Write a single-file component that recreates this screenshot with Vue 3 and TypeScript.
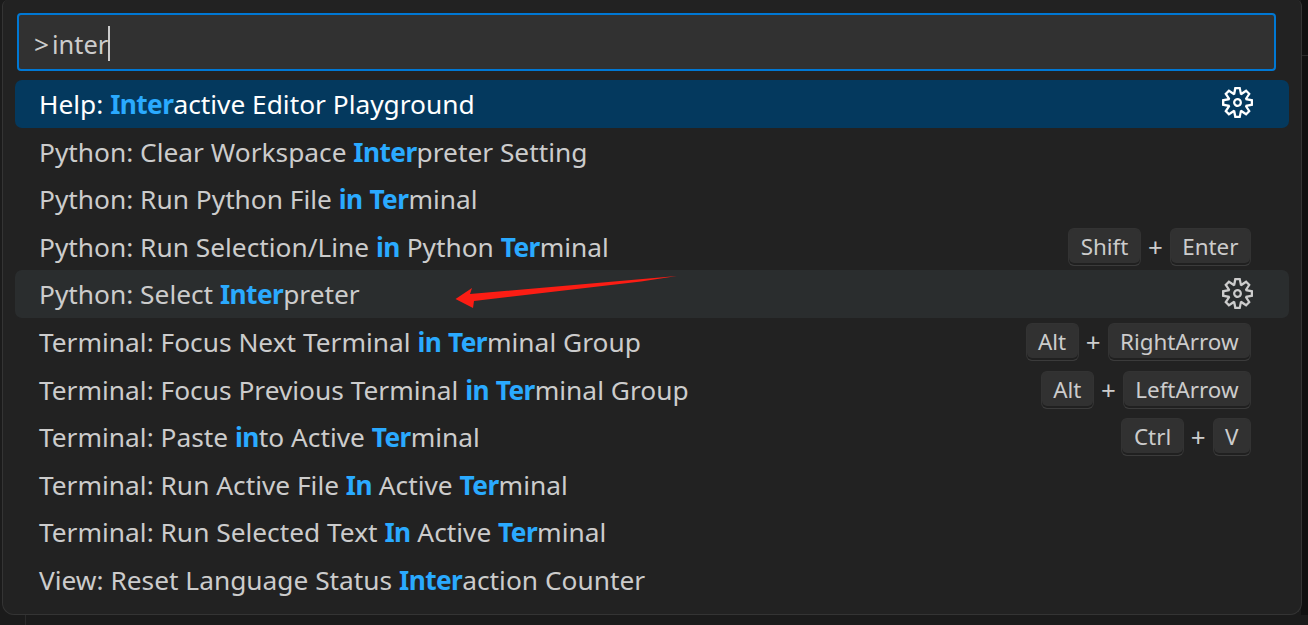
<script setup lang="ts">
interface Cmd {
  label: string[]
  keys?: string[]
  gear?: boolean
  selected?: boolean
  hovered?: boolean
}

// label is split as plain / match / plain / match / plain
const commands: Cmd[] = [
  { label: ['Help: ', 'Inter', 'active Editor Playground'], gear: true, selected: true },
  { label: ['Python: Clear Workspace ', 'Inter', 'preter Setting'] },
  { label: ['Python: Run Python File ', 'in', ' ', 'Ter', 'minal'] },
  { label: ['Python: Run Selection/Line ', 'in', ' Python ', 'Ter', 'minal'], keys: ['Shift', 'Enter'] },
  { label: ['Python: Select ', 'Inter', 'preter'], gear: true, hovered: true },
  { label: ['Terminal: Focus Next Terminal ', 'in', ' ', 'Ter', 'minal Group'], keys: ['Alt', 'RightArrow'] },
  { label: ['Terminal: Focus Previous Terminal ', 'in', ' ', 'Ter', 'minal Group'], keys: ['Alt', 'LeftArrow'] },
  { label: ['Terminal: Paste ', 'in', 'to Active ', 'Ter', 'minal'], keys: ['Ctrl', 'V'] },
  { label: ['Terminal: Run Active File ', 'In', ' Active ', 'Ter', 'minal'] },
  { label: ['Terminal: Run Selected Text ', 'In', ' Active ', 'Ter', 'minal'] },
  { label: ['View: Reset Language Status ', 'Inter', 'action Counter'] }
]

const gearPath =
  'M19.85 8.75l4.15.83v4.84l-4.15.83 2.35 3.52-3.43 3.43-3.52-2.35-.83 4.15H9.58l-.83-4.15-3.52 2.35-3.43-3.43 2.35-3.52L0 14.42V9.58l4.15-.83L1.8 5.23 5.23 1.8l3.52 2.35L9.58 0h4.84l.83 4.15 3.52-2.35 3.43 3.43-2.35 3.52zm-1.57 5.07l4-.81v-2l-4-.81-.54-1.3 2.29-3.43-1.43-1.43-3.43 2.29-1.3-.54-.81-4h-2l-.81 4-1.3.54-3.43-2.29-1.43 1.43L6.38 8.9l-.54 1.3-4 .81v2l4 .81.54 1.3-2.29 3.43 1.43 1.43 3.43-2.29 1.3.54.81 4h2l.81-4 1.3-.54 3.43 2.29 1.43-1.43-2.29-3.43.54-1.3zm-8.186-4.672A3.43 3.43 0 0 1 12 8.57 3.44 3.44 0 0 1 15.43 12a3.43 3.43 0 1 1-5.336-2.852zm.956 4.274c.281.188.612.288.95.288A1.7 1.7 0 0 0 13.71 12a1.71 1.71 0 1 0-2.66 1.422z'
</script>

<template>
  <div class="screen">
    <div class="palette">
      <div class="search">
        <span class="prompt">&gt;</span><span class="query">inter</span><span class="caret"></span>
      </div>
      <div class="list">
        <div
          v-for="(cmd, i) in commands"
          :key="i"
          :class="['row', { selected: cmd.selected, hovered: cmd.hovered }]"
        >
          <span class="label">
            <template v-for="(part, j) in cmd.label" :key="j">
              <b v-if="j % 2 === 1" class="match">{{ part }}</b>
              <template v-else>{{ part }}</template>
            </template>
          </span>
          <span v-if="cmd.keys" class="keys">
            <kbd>{{ cmd.keys[0] }}</kbd>
            <span class="plus">+</span>
            <kbd>{{ cmd.keys[1] }}</kbd>
          </span>
          <svg v-if="cmd.gear" class="gear" viewBox="0 0 24 24" width="31" height="31">
            <path :d="gearPath" fill="currentColor" fill-rule="evenodd" />
          </svg>
        </div>
      </div>
      <!-- annotation drawn over the screenshot -->
      <svg class="arrow" viewBox="0 0 240 40" width="240" height="40">
        <polygon points="14.5,33 31,22 29,28 236,10 200,15.5 33,35 32,42" fill="#fb1d14" />
      </svg>
    </div>
  </div>
</template>

<style>
html, body { margin: 0; background: #181818; }
</style>

<style scoped>
.screen { width: 1308px; height: 625px; overflow: hidden; font-family: "Noto Sans", "Open Sans", sans-serif; background-color: #1b1b1b; background-image: linear-gradient(#2b2b2b, #2b2b2b), linear-gradient(#111111, #111111), linear-gradient(#2b2b2b, #2b2b2b); background-repeat: no-repeat; background-size: 6px 1px, 7px 615px, 1px 10px; background-position: right 0 top 55px, right 0 top 0, 25px bottom; }
.palette { position: relative; box-sizing: border-box; width: 1300px; height: 615px; margin-left: 2px; padding: 13px 12px 0 12px; background: #222222; border: 1px solid #343434; border-top: none; border-radius: 6px 6px 12px 12px; }
.search { box-sizing: border-box; display: flex; align-items: center; width: 1259px; height: 58px; margin-left: 2px; padding: 3px 0 0 15px; background: #313131; border: 2px solid #0078d4; border-radius: 4px; }
.prompt { font-size: 26.2px; color: #cccccc; margin-right: 3px; }
.query { font-size: 25.4px; color: #cccccc; }
.caret { width: 1.5px; height: 35px; background: #cccccc; }
.list { margin-top: 9px; }
.row { display: flex; align-items: center; justify-content: space-between; box-sizing: border-box; height: 47.6px; padding: 0 38px 0 24px; border-radius: 7px; color: #cccccc; font-size: 26.3px; white-space: pre; }
.row.selected { background: #04395e; color: #ffffff; }
.row.hovered { background: #2a2d2e; }
.label { padding-top: 0.6px; }
.match { color: #2aaaff; font-weight: 700; letter-spacing: -0.6px; }
.gear { margin-right: -2px; margin-top: -2px; }
.keys { display: flex; align-items: center; gap: 7px; margin-top: 1px; }
.plus { font-size: 26px; }
kbd { box-sizing: border-box; display: block; height: 38px; padding: 0 11.5px; font-family: inherit; font-size: 22.4px; line-height: 35px; color: #cccccc; background: #313131; border: 1px solid #333333; border-bottom-color: #3b3b3b; border-radius: 6px; box-shadow: inset 0 -2px 0 #202020; }
.arrow { position: absolute; left: 438px; top: 266px; overflow: visible; }
</style>
